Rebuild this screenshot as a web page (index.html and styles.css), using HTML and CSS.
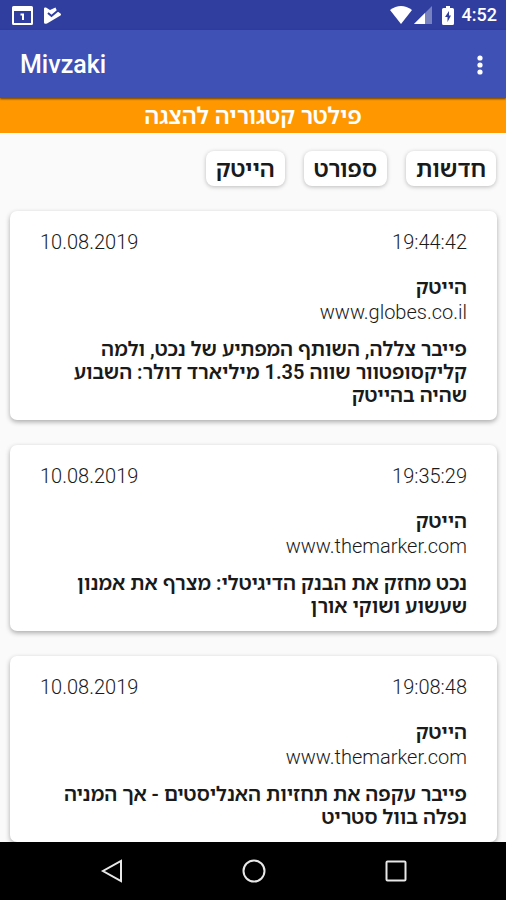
FILE: index.html
```html
<!DOCTYPE html>
<html lang="he">
<head>
<meta charset="utf-8">
<meta name="viewport" content="width=device-width, initial-scale=1">
<title>Mivzaki</title>
<link rel="stylesheet" href="styles.css">
</head>
<body>
<div class="status">
  <svg class="status-icon" width="21" height="19" viewBox="0 0 21 19" aria-hidden="true"><path fill="#fff" fill-rule="evenodd" d="M1.500 0h18Q21 0 21 1.500v16q0 1.500-1.500 1.500h-18Q0 19 0 17.500v-16Q0 0 1.500 0zM2 5v12h17V5z"/><path d="M8.500 8.500h2.500V14" fill="none" stroke="#fff" stroke-width="2"/></svg>
  <svg class="status-icon" width="17" height="17" viewBox="0 0 17 17" aria-hidden="true"><path fill="#fff" d="M0 1.500Q0 0 2 .500L6 3l5.500-2.500L13 4l3.500 2.500q1 1 0 2L3 16.500q-3 1-3-1z"/><path d="M4 6l3.500 3L14 3.500" fill="none" stroke="#303f9f" stroke-width="2"/></svg>
  <div class="status-right">
    <svg width="22" height="18" viewBox="0 0 22 18" aria-hidden="true"><path fill="#fff" d="M0 4Q11-4 22 4L11 18z"/></svg>
    <svg width="18" height="18" viewBox="0 0 18 18" aria-hidden="true"><path fill="#fff" fill-opacity=".35" d="M18 0v18H0z"/><path fill="#fff" d="M11 7v11H0z"/></svg>
    <svg class="battery" width="12" height="19" viewBox="0 0 12 19" aria-hidden="true"><path fill="#fff" d="M4 0h4v2h2.500Q12 2 12 3.500v14q0 1.500-1.500 1.500h-9Q0 19 0 17.500v-14Q0 2 1.500 2H4z"/><path fill="#303f9f" d="M7 5L3 11h2.500v5L9 9.500H7z"/></svg>
    <span class="clock">4:52</span>
  </div>
</div>
<header class="appbar">
  <h1 class="title">Mivzaki</h1>
  <button class="more" type="button" aria-label="More options"><svg width="6" height="20" viewBox="0 0 6 20"><g fill="#fff"><circle cx="3" cy="3" r="2.600"/><circle cx="3" cy="10" r="2.600"/><circle cx="3" cy="17" r="2.600"/></g></svg></button>
</header>
<main class="content" dir="rtl">
  <h2 class="banner">פילטר קטגוריה להצגה</h2>
  <div class="chips">
    <button class="chip" type="button">חדשות</button>
    <button class="chip" type="button">ספורט</button>
    <button class="chip" type="button">הייטק</button>
  </div>
  <div class="feed">
    <article class="card">
      <div class="meta"><time>19:44:42</time><time>10.08.2019</time></div>
      <div class="category">הייטק</div>
      <div class="source" dir="ltr">www.globes.co.il</div>
      <h3 class="headline">פייבר צללה, השותף המפתיע של נכט, ולמה קליקסופטוור שווה 1.35 מיליארד דולר: השבוע שהיה בהייטק</h3>
    </article>
    <article class="card">
      <div class="meta"><time>19:35:29</time><time>10.08.2019</time></div>
      <div class="category">הייטק</div>
      <div class="source" dir="ltr">www.themarker.com</div>
      <h3 class="headline">נכט מחזק את הבנק הדיגיטלי: מצרף את אמנון שעשוע ושוקי אורן</h3>
    </article>
    <article class="card">
      <div class="meta"><time>19:08:48</time><time>10.08.2019</time></div>
      <div class="category">הייטק</div>
      <div class="source" dir="ltr">www.themarker.com</div>
      <h3 class="headline">פייבר עקפה את תחזיות האנליסטים - אך המניה נפלה בוול סטריט</h3>
    </article>
  </div>
</main>
<nav class="navbar">
  <button class="nav" type="button" aria-label="Back"><svg width="24" height="24" viewBox="0 0 24 24"><path d="M21 2v20L3 12z"/></svg></button>
  <button class="nav" type="button" aria-label="Home"><svg width="24" height="24" viewBox="0 0 24 24"><circle cx="12" cy="12" r="10.500"/></svg></button>
  <button class="nav" type="button" aria-label="Recent apps"><svg width="24" height="24" viewBox="0 0 24 24"><rect x="2.500" y="2.500" width="19" height="19" rx="1"/></svg></button>
</nav>
</body>
</html>
```
FILE: styles.css
```css
* { box-sizing: border-box; }
body {
  margin: 0;
  height: 100vh;
  display: flex;
  flex-direction: column;
  overflow: hidden;
  background: #fafafa;
  color: #1a1a1a;
  font-family: Roboto, "Noto Sans Hebrew", "Open Sans", sans-serif;
}
h1, h2, h3 { margin: 0; }
button { border: 0; padding: 0; font: inherit; color: inherit; background: none; }
svg { display: block; }
.status {
  flex: none;
  display: flex;
  align-items: center;
  gap: 11px;
  height: 30px;
  padding: 0 9px 0 12px;
  background: #303f9f;
  color: #fff;
}
.status-right { display: flex; align-items: center; gap: 2px; margin-left: auto; }
.battery { margin: 0 6px 0 8px; }
.clock { font-size: 18px; font-weight: 500; line-height: 20px; }
.appbar {
  flex: none;
  position: relative;
  display: flex;
  align-items: center;
  justify-content: space-between;
  height: 68px;
  padding: 2px 23px 0 20px;
  background: #3f51b5;
  color: #fff;
  box-shadow: 0 1px 2px rgba(0, 0, 0, .6);
}
.title { font-size: 25px; font-weight: 500; line-height: 30px; }
.content { flex: 1; min-height: 0; overflow: hidden; }
.banner {
  height: 35px;
  background: #ff9800;
  color: #fff;
  font-size: 23px;
  font-weight: 600;
  line-height: 38px;
  text-align: center;
}
.chips { display: flex; gap: 19px; padding: 18px 10px 25px; }
.chip {
  height: 35px;
  padding: 0 10px;
  border-radius: 8px;
  background: #fff;
  box-shadow: 0 1px 4px rgba(0, 0, 0, .25);
  font-size: 23px;
  font-weight: 600;
  line-height: 37px;
}
.feed { display: flex; flex-direction: column; gap: 25px; padding: 0 9px 0 10px; }
.card {
  padding: 19px 30px 13px;
  border-radius: 7px;
  background: #fff;
  box-shadow: 0 2px 5px rgba(0, 0, 0, .32);
}
.meta {
  display: flex;
  justify-content: space-between;
  margin-bottom: 21px;
  font-size: 20px;
  font-weight: 300;
  line-height: 24px;
}
.category { font-size: 20px; font-weight: 600; line-height: 25px; }
.source { font-size: 20px; font-weight: 300; line-height: 25px; text-align: right; }
.headline { margin-top: 13px; font-size: 20px; font-weight: 600; line-height: 23px; }
.navbar {
  flex: none;
  display: flex;
  justify-content: center;
  gap: 118px;
  height: 58px;
  padding-left: 1px;
  background: #000;
}
.nav svg { fill: none; stroke: #e8e8e8; stroke-width: 2; }
```
